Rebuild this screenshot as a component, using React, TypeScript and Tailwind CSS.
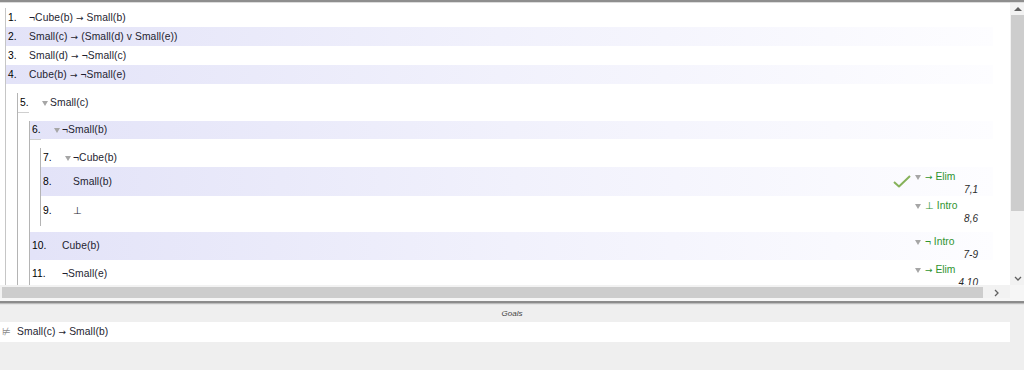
import React from "react";

type Just = { rule: string; refs: string };

const hl = "bg-linear-to-r from-[#e3e3f8] via-[#f1f1fc] to-[#fdfdff]";

// arrows look thin in Liberation Sans, so draw them with DejaVu
function F({ s }: { s: string }) {
  const parts = s.split("→");
  return (
    <>
      {parts.map((p, i) => (
        <React.Fragment key={i}>
          {i > 0 && <span className="font-['DejaVu_Sans',sans-serif] text-[9px]">→</span>}
          {p}
        </React.Fragment>
      ))}
    </>
  );
}

function Tri() {
  return <span className="mt-[1px] inline-block h-0 w-0 border-x-[3px] border-t-[5px] border-x-transparent border-t-[#a6a6a6]" />;
}

function Justification({ j, check }: { j: Just; check?: boolean }) {
  return (
    <div className="ml-auto flex items-start self-start">
      {check && (
        <svg className="mr-[4px] mt-[8px]" width="18" height="13" viewBox="0 0 18 13">
          <path d="M1 7 L6 11.5 L17 1" fill="none" stroke="#86b25a" strokeWidth="2" strokeLinejoin="round" />
        </svg>
      )}
      <div className="mr-[15px] w-[63px] pt-[3px]">
        <div className="flex h-[13px] items-center gap-[4px] leading-[13px]">
          <Tri />
          <span className="text-[#2f942f]">
            <F s={j.rule} />
          </span>
        </div>
        <div className="h-[13px] text-right text-[10px] italic leading-[13px] text-[#2a2a2a]">{j.refs}</div>
      </div>
    </div>
  );
}

function Line({
  n,
  text,
  tri,
  shade,
  h,
  just,
  check,
  underline,
}: {
  n: string;
  text: string;
  tri?: boolean;
  shade?: boolean;
  h: string;
  just?: Just;
  check?: boolean;
  underline?: boolean;
}) {
  return (
    <div className="relative">
      <div className={`flex items-center pl-[2px] ${h} ${shade ? hl : ""}`}>
        <span className={`${tri === undefined ? "w-[21px]" : "w-[22px]"} shrink-0 text-black`}>{n}</span>
        {tri !== undefined && <span className="flex w-[8px] shrink-0 items-center">{tri && <Tri />}</span>}
        <span className="tracking-[0.1px] text-[#1e1e30]">
          <F s={text} />
        </span>
        {just && <Justification j={just} check={check} />}
      </div>
      {underline && <div className="h-px w-[11px] bg-[#cfcfcf]" />}
    </div>
  );
}

export default function App() {
  return (
    <div className="h-[370px] w-[1024px] overflow-hidden bg-[#efefef] font-['Liberation_Sans',Arial,sans-serif] text-[10.3px]">
      <div className="h-[2px] bg-[#8e8e8e]" />
      <div className="h-px bg-[#dcdcdc]" />

      <div className="flex h-[282px]">
        <div className="w-[1010px] overflow-hidden bg-white pt-[5px]">
          <div className="ml-[5px] w-[988px] border-l border-[#c6c6c6]">
            <Line n="1." text="¬Cube(b) → Small(b)" h="h-[19px]" />
            <Line n="2." text="Small(c) → (Small(d) v Small(e))" h="h-[19px]" shade />
            <Line n="3." text="Small(d) → ¬Small(c)" h="h-[19px]" />
            <Line n="4." text="Cube(b) → ¬Small(e)" h="h-[19px]" shade />

            <div className="ml-[11px] mt-[9px] border-l border-[#b4b4b4]">
              <Line n="5." text="Small(c)" tri h="h-[19px]" underline />

              <div className="ml-[11px] mt-[8px] border-l border-[#b4b4b4]">
                <Line n="6." text="¬Small(b)" tri shade h="h-[18px]" underline />

                <div className="ml-[10px] mt-[8px] border-l border-[#b4b4b4]">
                  <Line n="7." text="¬Cube(b)" tri h="h-[19px]" />
                  <Line n="8." text="Small(b)" tri={false} shade h="h-[29px]" check just={{ rule: "→ Elim", refs: "7,1" }} />
                  <Line n="9." text="⊥" tri={false} h="h-[30px]" just={{ rule: "⊥ Intro", refs: "8,6" }} />
                </div>

                <div className="mt-[6px]">
                  <Line n="10." text="Cube(b)" tri={false} shade h="h-[28px]" just={{ rule: "¬ Intro", refs: "7-9" }} />
                  <Line n="11." text="¬Small(e)" tri={false} h="h-[28px]" just={{ rule: "→ Elim", refs: "4,10" }} />
                </div>
              </div>
            </div>
          </div>
        </div>

        {/* vertical scrollbar */}
        <div className="flex w-[14px] flex-col bg-[#f2f2f2] pl-px">
          <div className="flex h-[12px] items-center justify-center">
            <span className="h-0 w-0 border-x-[4px] border-b-[4px] border-x-transparent border-b-[#606060]" />
          </div>
          <div className="h-[196px] bg-[#cdcdcd]" />
          <div className="flex-1" />
          <div className="flex h-[14px] items-center justify-center">
            <svg width="8" height="5" viewBox="0 0 8 5">
              <path d="M1 1 L4 4 L7 1" fill="none" stroke="#606060" strokeWidth="1.3" />
            </svg>
          </div>
        </div>
      </div>

      {/* horizontal scrollbar */}
      <div className="flex h-[13px] bg-[#f2f2f2]">
        <div className="flex w-[1010px] items-center pl-[2px] pt-[2px]">
          <div className="h-[11px] w-[981px] bg-[#cdcdcd]" />
          <div className="flex flex-1 items-center justify-center">
            <svg width="5" height="8" viewBox="0 0 5 8">
              <path d="M1 1 L4 4 L1 7" fill="none" stroke="#606060" strokeWidth="1.3" />
            </svg>
          </div>
        </div>
        <div className="flex-1 bg-[#f6f6f6]" />
      </div>

      {/* split divider */}
      <div className="h-[3px] bg-[#f6f6f6]" />
      <div className="h-[2px] bg-[#8c8c8c]" />
      <div className="h-px bg-[#bcbcbc]" />
      <div className="h-px bg-[#e4e4e4]" />

      {/* goals */}
      <div className="flex h-[17px] items-center justify-center text-[8px] italic text-[#444]">Goals</div>
      <div className="flex h-[20px] w-[1010px] items-center bg-white">
        <span className="ml-[2px] w-[15px] text-[#8a8a8a]">⊭</span>
        <span className="tracking-[0.1px] text-[#1e1e30]">
          <F s="Small(c) → Small(b)" />
        </span>
      </div>
    </div>
  );
}
